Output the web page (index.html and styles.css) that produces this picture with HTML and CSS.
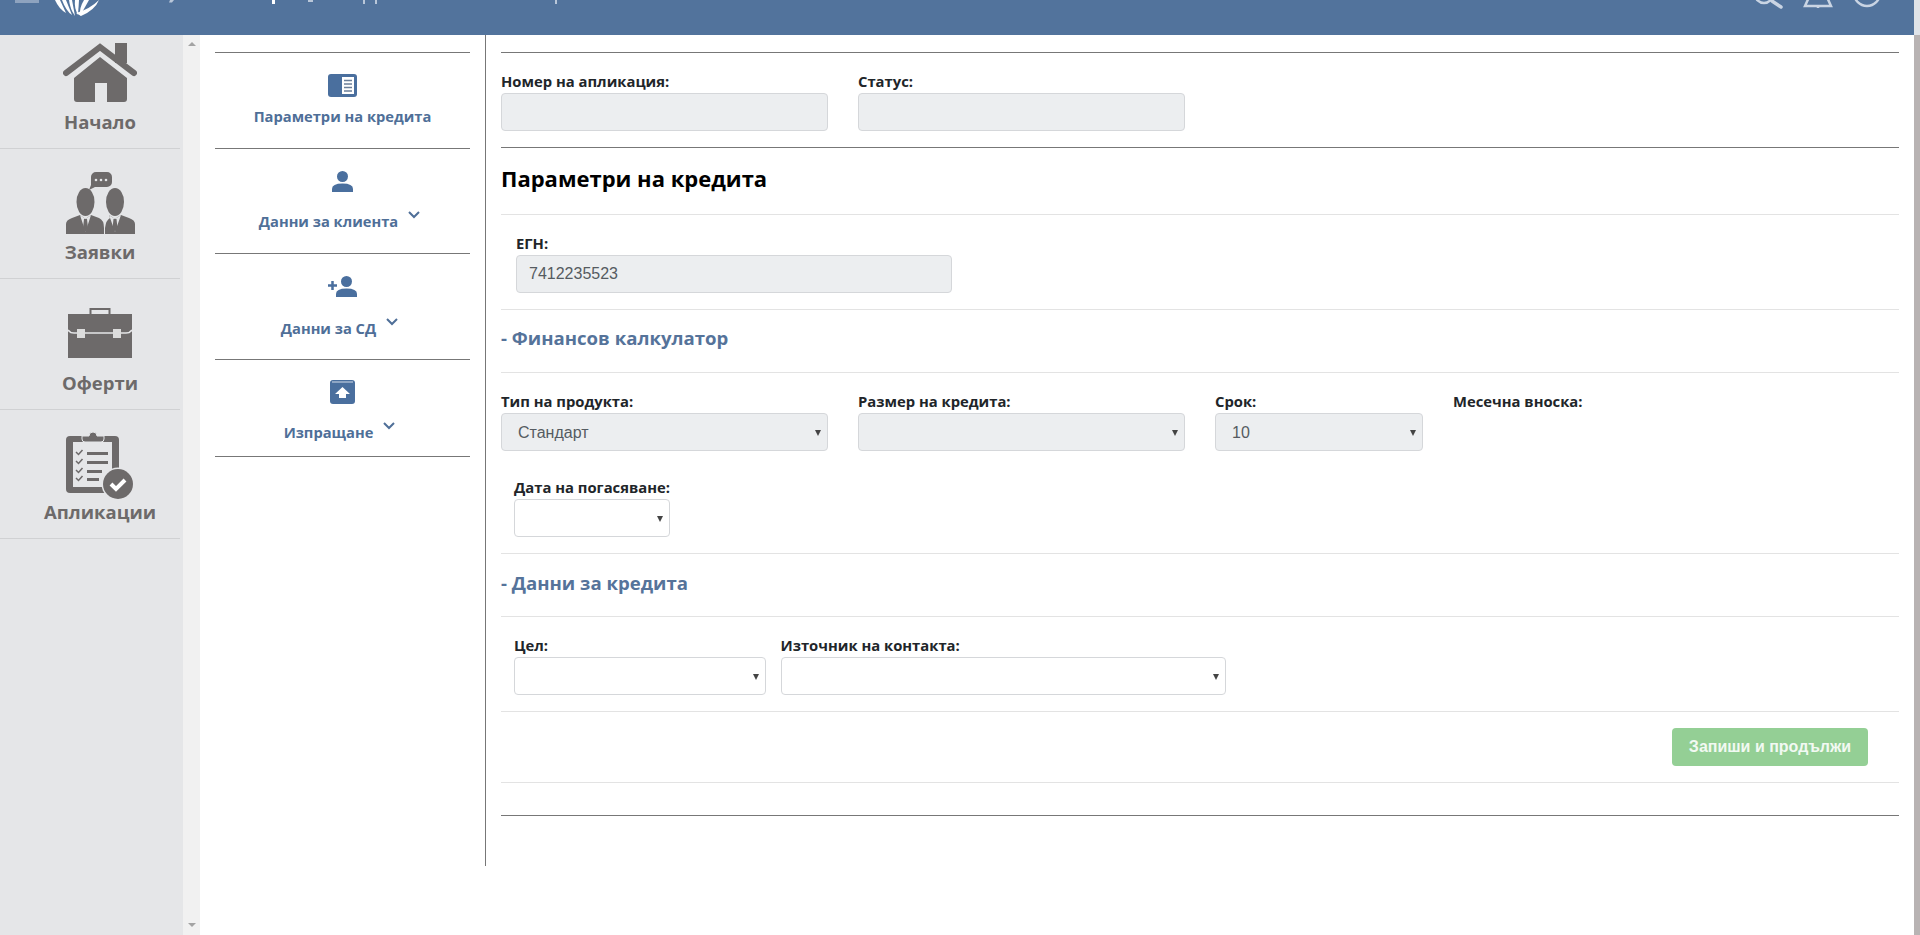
FILE: index.html
```html
<!DOCTYPE html>
<html lang="bg">
<head>
<meta charset="utf-8">
<meta name="viewport" content="width=device-width, initial-scale=1">
<title>Параметри на кредита</title>
<link rel="stylesheet" href="styles.css">
</head>
<body>

<header class="topbar">
  <svg class="top-left" width="600" height="16" viewBox="0 0 600 16">
    <!-- the page is scrolled, only the bottom of the header content is left -->
    <rect x="15" y="0" width="24" height="3" fill="#8ea3bf"/>
    <g fill="#fff">
      <path d="M55 0 L60 0 L66 13 Q59 9 55 0Z"/>
      <path d="M62 0 L66 0 L72 15 Q66 11 62 0Z"/>
      <path d="M69 0 L72 0 L75 16 Q70 9 69 0Z"/>
      <path d="M75 0 L79 0 L78 15 Q74 8 75 0Z"/>
      <path d="M84 0 L89 0 L80 16 Q79 8 84 0Z"/>
      <path d="M99 3 Q95 13 81 19 L76 16 Q90 12 99 3Z" transform="translate(0 -3)"/>
    </g>
    <g fill="#b9c7d9">
      <path d="M170 0h4l-2 2.5h-3z"/>
      <rect x="308" y="0" width="5" height="2"/>
      <rect x="363" y="0" width="2" height="4"/>
      <rect x="375" y="0" width="2" height="4"/>
      <rect x="555" y="0" width="2" height="4"/>
    </g>
    <rect x="272" y="0" width="3" height="4" fill="#fff"/>
  </svg>
  <svg class="top-right" width="130" height="16" viewBox="0 0 130 16">
    <g fill="none" stroke="#c9d4e3" stroke-width="2.5">
      <circle cx="10" cy="-6" r="9"/>
      <path d="M18 1 L27 7" stroke-width="3.5" stroke-linecap="round"/>
      <path d="M56 -5 L51 6 H77 L72 -5"/>
      <path d="M64 6 V8"/>
      <circle cx="113" cy="-7" r="13"/>
    </g>
  </svg>
</header>

<div class="shell">
  <nav class="sidebar">
    <a class="side-item side-home">
      <svg width="74" height="60" viewBox="0 0 74 60">
        <path d="M3 30 L37 4 L71 30" fill="none" stroke="#6d6a6a" stroke-width="6" stroke-linecap="round"/>
        <rect x="52" y="0" width="12" height="20" fill="#6d6a6a"/>
        <path d="M11 35 L37 14 L64 35 V56 a3 3 0 0 1 -3 3 H44 V40 H32 V59 H14 a3 3 0 0 1 -3 -3 Z" fill="#6d6a6a"/>
      </svg>
      <span>Начало</span>
    </a>
    <a class="side-item side-requests">
      <svg width="69" height="62" viewBox="0 0 69 62">
        <path d="M30 0 H41 a5 5 0 0 1 5 5 V10 a5 5 0 0 1 -5 5 H29 L23 18 L25 13 V5 a5 5 0 0 1 5 -5Z" fill="#6d6a6a"/>
        <g fill="#e5e6e8"><circle cx="30" cy="8" r="1.3"/><circle cx="35" cy="8" r="1.3"/><circle cx="40" cy="8" r="1.3"/></g>
        <ellipse cx="19.5" cy="30" rx="9" ry="14" fill="#6d6a6a"/>
        <ellipse cx="49" cy="30" rx="9" ry="14" fill="#6d6a6a"/>
        <path d="M0 62 V52 Q0 48 6 46 L14 43 L19.5 47 L25 43 L33 46 Q38 48 38 56 V62Z" fill="#6d6a6a"/>
        <path d="M39 62 L39 56 Q40 48 44 46 L43 43 L49 47 L55 43 L63 46 Q69 48 69 52 V62Z" fill="#6d6a6a"/>
        <path d="M14 43 L19.5 60 L25 43 L19.5 47Z M43 43 L49 60 L55 43 L49 47Z" fill="#e5e6e8"/>
        <path d="M18 47 H21 L22 56 L19.5 60 L17 56Z M47.5 47 H50.500 L51.500 56 L49 60 L46.500 56Z" fill="#6d6a6a"/>
      </svg>
      <span>Заявки</span>
    </a>
    <a class="side-item side-offers">
      <svg width="64" height="51" viewBox="0 0 64 51">
        <rect x="22.500" y="1" width="19" height="7" fill="none" stroke="#6d6a6a" stroke-width="2"/>
        <path d="M0 6 H64 V50 H0Z" fill="#6d6a6a"/>
        <path d="M0 22 Q2 25 6 25 H58 Q62 25 64 22" fill="none" stroke="#e5e6e8" stroke-width="1.500"/>
        <rect x="9" y="21" width="8" height="9" fill="#dcdcdc"/>
        <rect x="45" y="21" width="8" height="9" fill="#dcdcdc"/>
      </svg>
      <span>Оферти</span>
    </a>
    <a class="side-item side-apps">
      <svg width="68" height="70" viewBox="0 0 68 70">
        <rect x="0" y="7" width="53" height="57" rx="4" fill="#6d6a6a"/>
        <rect x="7" y="13" width="39" height="45" fill="#e5e6e8"/>
        <path d="M16 10 V7 H23 a4 4 0 0 1 8 0 H38 V10 a3 3 0 0 1 -3 3 H19 a3 3 0 0 1 -3 -3Z" fill="#6d6a6a" stroke="#e5e6e8"/>
        <g fill="none" stroke="#6d6a6a" stroke-width="1.500">
          <path d="M10 23 l2.500 2.500 l4 -4.500"/>
          <path d="M10 32 l2.500 2.500 l4 -4.500"/>
          <path d="M10 41 l2.500 2.500 l4 -4.500"/>
          <path d="M10 49 l2.500 2.500 l4 -4.500"/>
        </g>
        <g fill="#6d6a6a">
          <rect x="21" y="23" width="21" height="3"/>
          <rect x="21" y="32" width="21" height="3"/>
          <rect x="21" y="41" width="15" height="3"/>
          <rect x="21" y="49" width="12" height="3"/>
        </g>
        <circle cx="52" cy="55" r="16.500" fill="#e5e6e8"/>
        <circle cx="52" cy="55" r="15" fill="#6d6a6a"/>
        <path d="M45 55 l5 5 l9 -9" fill="none" stroke="#fff" stroke-width="4"/>
      </svg>
      <span>Апликации</span>
    </a>
  </nav>
  <div class="side-scroll">
    <i class="arrow-up"></i>
    <i class="arrow-down"></i>
  </div>

  <nav class="subnav">
    <a class="sub-item sub-params">
      <svg width="29" height="23" viewBox="0 0 29 23">
        <rect width="29" height="23" rx="3" fill="#4a6f9e"/>
        <rect x="14" y="3" width="12" height="17" fill="#fff"/>
        <path d="M16 6.500 H24 M16 10 H24 M16 13.500 H24 M16 17 H24" stroke="#6b7f99" stroke-width="1.500"/>
      </svg>
      <span class="sub-label">Параметри на кредита</span>
    </a>
    <a class="sub-item sub-client">
      <svg width="21" height="21" viewBox="0 0 21 21">
        <circle cx="10.500" cy="5.500" r="5.500" fill="#4a6f9e"/>
        <path d="M0 21 V18 Q0 12.500 10.500 12.500 Q21 12.500 21 18 V21Z" fill="#4a6f9e"/>
      </svg>
      <span class="sub-row">
        <span class="sub-label">Данни за клиента</span>
        <svg class="chevron" width="12" height="8" viewBox="0 0 12 8"><path d="M1 1 L6 6 L11 1" fill="none" stroke="#4f6f98" stroke-width="2"/></svg>
      </span>
    </a>
    <a class="sub-item sub-sd">
      <svg width="29" height="21" viewBox="0 0 29 21">
        <circle cx="18.500" cy="5.500" r="5.500" fill="#4a6f9e"/>
        <path d="M8 21 V18 Q8 12.500 18.500 12.500 Q29 12.500 29 18 V21Z" fill="#4a6f9e"/>
        <path d="M0 9.500 H9 M4.500 5 V14" stroke="#4a6f9e" stroke-width="2.500"/>
      </svg>
      <span class="sub-row">
        <span class="sub-label">Данни за СД</span>
        <svg class="chevron" width="12" height="8" viewBox="0 0 12 8"><path d="M1 1 L6 6 L11 1" fill="none" stroke="#4f6f98" stroke-width="2"/></svg>
      </span>
    </a>
    <a class="sub-item sub-send">
      <svg width="25" height="24" viewBox="0 0 25 24">
        <rect width="25" height="24" rx="3" fill="#4a6f9e"/>
        <rect x="2" y="1" width="21" height="2" fill="#8fa6c4"/>
        <path d="M12.500 7 L20 14 H16 V18 H9 V14 H5Z" fill="#fff"/>
      </svg>
      <span class="sub-row">
        <span class="sub-label">Изпращане</span>
        <svg class="chevron" width="12" height="8" viewBox="0 0 12 8"><path d="M1 1 L6 6 L11 1" fill="none" stroke="#4f6f98" stroke-width="2"/></svg>
      </span>
    </a>
  </nav>

  <main class="main">
    <div class="fields-row row-top">
      <div class="field w-wide">
        <label>Номер на апликация:</label>
        <input type="text" disabled>
      </div>
      <div class="field w-wide">
        <label>Статус:</label>
        <input type="text" disabled>
      </div>
    </div>

    <div class="title-row">
      <h2>Параметри на кредита</h2>
    </div>

    <div class="fields-row row-egn">
      <div class="field w-egn">
        <label>ЕГН:</label>
        <input type="text" value="7412235523" disabled>
      </div>
    </div>

    <div class="section-row section-calc">
      <h3>- Финансов калкулатор</h3>
    </div>

    <div class="calc-row">
      <div class="fields-line">
        <div class="field w-wide">
          <label>Тип на продукта:</label>
          <div class="select-box">
            <select disabled><option>Стандарт</option></select>
          </div>
        </div>
        <div class="field w-wide">
          <label>Размер на кредита:</label>
          <div class="select-box">
            <select disabled><option></option></select>
          </div>
        </div>
        <div class="field w-term">
          <label>Срок:</label>
          <div class="select-box">
            <select disabled><option>10</option></select>
          </div>
        </div>
        <div class="field">
          <label>Месечна вноска:</label>
        </div>
      </div>
      <div class="field w-date">
        <label>Дата на погасяване:</label>
        <div class="select-box">
          <select><option></option></select>
        </div>
      </div>
    </div>

    <div class="section-row section-credit">
      <h3>- Данни за кредита</h3>
    </div>

    <div class="fields-row row-credit">
      <div class="field w-goal">
        <label>Цел:</label>
        <div class="select-box">
          <select><option></option></select>
        </div>
      </div>
      <div class="field w-source">
        <label>Източник на контакта:</label>
        <div class="select-box">
          <select><option></option></select>
        </div>
      </div>
    </div>

    <div class="actions">
      <button type="button" class="btn-save">Запиши и продължи</button>
    </div>
  </main>

  <div class="page-scroll"></div>
</div>

</body>
</html>
```

FILE: styles.css
```css
* {
  box-sizing: border-box;
}

html, body {
  height: 100%;
}

body {
  margin: 0;
  overflow: hidden;
  background-color: #fff;
  font-family: "Open Sans", "Noto Sans", sans-serif;
  color: #212529;
}

.topbar {
  display: flex;
  justify-content: space-between;
  height: 35px;
  overflow: hidden;
  background-color: #52739c;
  border-right: 6px solid #dfe3e8;
}

.top-right {
  margin-right: 30px;
}

.shell {
  display: flex;
  height: 900px;
}

/* left menu */
.sidebar {
  flex: 0 0 183px;
  background-color: #e5e6e8;
}

.side-item {
  display: flex;
  flex-direction: column;
  align-items: center;
  width: 180px;
  padding-left: 20px;
  padding-bottom: 12px;
  border-bottom: 1px solid #d0d1d3;
  color: #6d6a6a;
}

.side-item svg {
  display: block;
}

.side-item span {
  font-size: 18.500px;
  font-weight: 700;
  line-height: 26px;
  white-space: nowrap;
}

.side-home { padding-top: 8px; padding-bottom: 13px; }
.side-home span { margin-top: 6px; }
.side-requests { padding-top: 23px; padding-bottom: 13px; }
.side-requests span { margin-top: 5px; }
.side-offers { padding-top: 29px; padding-bottom: 13px; }
.side-offers span { margin-top: 11px; }
.side-apps { padding-top: 19px; padding-bottom: 13px; }
.side-apps span { margin-top: 0; }

.side-scroll {
  flex: 0 0 17px;
  display: flex;
  flex-direction: column;
  justify-content: space-between;
  align-items: center;
  padding: 7px 0 8px;
  background-color: #f1f1f1;
}

.arrow-up,
.arrow-down {
  width: 0;
  height: 0;
  border-left: 4px solid transparent;
  border-right: 4px solid transparent;
}

.arrow-up { border-bottom: 4px solid #a3a3a3; }
.arrow-down { border-top: 4px solid #a3a3a3; }

/* steps */
.subnav {
  flex: 0 0 285px;
  padding: 17px 15px 0;
}

.sub-item {
  display: flex;
  flex-direction: column;
  align-items: center;
  border-bottom: 1px solid #777;
  color: #4f6f98;
}

.sub-item:first-child {
  border-top: 1px solid #777;
}

.sub-item svg {
  display: block;
}

.sub-label {
  display: block;
  font-size: 14.700px;
  font-weight: 700;
  line-height: 20px;
  white-space: nowrap;
}

.sub-row {
  display: flex;
  align-items: flex-start;
  padding-right: 6px;
}

.sub-item .chevron {
  margin: 0 0 0 10px;
}

.sub-params { padding: 21px 0 22px; }
.sub-params .sub-label { margin-top: 9px; }
.sub-client { padding: 22px 0 22px; }
.sub-client .sub-row { margin-top: 19px; }
.sub-sd { padding: 22px 0 21px; }
.sub-sd .sub-row { margin-top: 21px; }
.sub-send { padding: 20px 0 14px; }
.sub-send .sub-row { margin-top: 18px; }

/* form */
.main {
  flex: 1;
  height: 831px;
  padding: 17px 15px 0;
  border-left: 1px solid #777;
}

.main > div {
  border-bottom: 1px solid #e3e3e3;
}

.fields-row,
.fields-line {
  display: flex;
  gap: 30px;
}

.fields-row {
  padding: 18px 0 16px;
}

.row-top {
  border-top: 1px solid #777;
}

.main > .row-top {
  border-bottom-color: #777;
}

.row-egn {
  padding: 18px 0 16px 15px;
}

.row-credit {
  gap: 15px;
  padding-left: 13px;
}

.field label {
  display: block;
  margin-bottom: 2px;
  font-size: 14.800px;
  font-weight: 700;
  line-height: 20px;
  white-space: nowrap;
}

.row-egn label {
  margin-bottom: 2px;
}

.w-wide { width: 327px; }
.w-term { width: 208px; }
.w-egn { width: 436px; }
.w-goal { width: 251.500px; }
.w-source { width: 445px; }
.w-date {
  width: 155.500px;
  margin: 26px 0 0 13px;
}

input,
select {
  display: block;
  width: 100%;
  height: 38px;
  border: 1px solid #d5d7da;
  border-radius: 4px;
  background-color: #fff;
  font-family: "Liberation Sans", Arial, sans-serif;
  font-size: 16px;
  color: #555b61;
}

input {
  padding: 0 12px;
}

select {
  padding: 0 24px 0 16px;
  appearance: none;
  -webkit-appearance: none;
}

input:disabled,
select:disabled {
  background-color: #eceef0;
  opacity: 1;
}

.select-box {
  position: relative;
}

.select-box::after {
  content: "";
  position: absolute;
  top: 17px;
  right: 7px;
  border-left: 3px solid transparent;
  border-right: 3px solid transparent;
  border-top: 6px solid #444;
}

.title-row {
  padding: 14px 0 20px;
}

h2 {
  margin: 0;
  font-size: 22px;
  font-weight: 700;
  line-height: 32px;
  color: #000;
}

.section-calc {
  padding: 15px 0 21px;
}

.section-credit {
  padding: 16px 0 20px;
}

h3 {
  margin: 0;
  font-size: 18.600px;
  font-weight: 700;
  line-height: 26px;
  color: #55739a;
}

.calc-row {
  padding: 18px 0 16px;
}

.actions {
  display: flex;
  justify-content: flex-end;
  padding: 16px 31px 16px 0;
  position: relative;
}

/* closing rule of the form */
.actions::after {
  content: "";
  position: absolute;
  left: 0;
  right: 0;
  bottom: -34px;
  border-top: 1px solid #777;
}

.btn-save {
  width: 196px;
  height: 38px;
  padding: 0;
  border: none;
  border-radius: 4px;
  background-color: #94cf95;
  font-family: "Liberation Sans", Arial, sans-serif;
  font-size: 16px;
  font-weight: 700;
  color: #f2f9f2;
}

.page-scroll {
  flex: 0 0 6px;
  background-color: #b8b3b3;
}
```
